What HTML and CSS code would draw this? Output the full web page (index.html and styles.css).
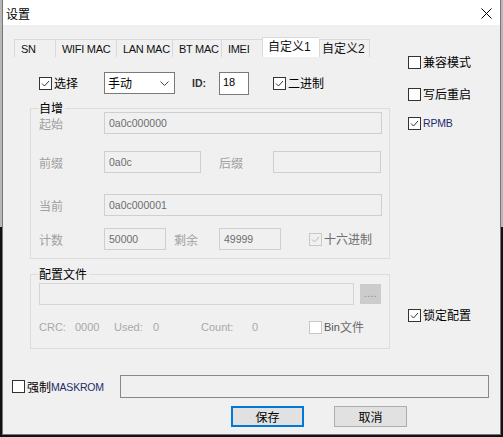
FILE: index.html
```html
<!DOCTYPE html>
<html>
<head>
<meta charset="utf-8">
<link rel="stylesheet" href="styles.css">
</head>
<body>
<div class="window">
  <div class="titlebar">
    <span class="title">设置</span>
    <svg class="close" width="11" height="11" viewBox="0 0 11 11"><path d="M0.5 0.5L10.5 10.5M10.5 0.5L0.5 10.5" stroke="#000" stroke-width="1" fill="none"/></svg>
  </div>
  <div class="main">
    <div class="leftcol">
      <div class="tabs">
        <div class="tab t-sn">SN</div>
        <div class="tab t-wifi">WIFI MAC</div>
        <div class="tab t-lan">LAN MAC</div>
        <div class="tab t-bt">BT MAC</div>
        <div class="tab t-imei">IMEI</div>
        <div class="tab t-c1 active">自定义1</div>
        <div class="tab t-c2">自定义2</div>
      </div>
      <div class="panel">
        <div class="row1">
          <div class="check w-sel"><span class="box"><svg viewBox="0 0 11 11" width="11" height="11"><polyline points="2,5.5 4.5,8 9,3" class="tick"/></svg></span><span class="cjk">选择</span></div>
          <div class="select"><span>手动</span><svg width="9" height="5" viewBox="0 0 9 5"><polyline points="0.5,0.5 4.5,4.5 8.5,0.5" fill="none" stroke="#444" stroke-width="1"/></svg></div>
          <div class="idlabel">ID:</div>
          <div class="idinput">18</div>
          <div class="check w-bin"><span class="box"><svg viewBox="0 0 11 11" width="11" height="11"><polyline points="2,5.5 4.5,8 9,3" class="tick"/></svg></span><span class="cjk">二进制</span></div>
        </div>

        <fieldset class="group g-inc">
          <legend class="legend">自增</legend>
          <div class="grow r-start">
            <div class="glabel">起始</div>
            <div class="field f-long">0a0c000000</div>
          </div>
          <div class="grow r-prefix">
            <div class="glabel">前缀</div>
            <div class="field f-prefix">0a0c</div>
            <div class="glabel l-suffix">后缀</div>
            <div class="field f-suffix"></div>
          </div>
          <div class="grow r-cur">
            <div class="glabel">当前</div>
            <div class="field f-long">0a0c000001</div>
          </div>
          <div class="grow r-count">
            <div class="glabel">计数</div>
            <div class="field f-num">50000</div>
            <div class="glabel l-remain">剩余</div>
            <div class="field f-num">49999</div>
            <div class="check disabled w-hex"><span class="box"><svg viewBox="0 0 11 11" width="11" height="11"><polyline points="2,5.5 4.5,8 9,3" class="tick"/></svg></span><span class="cjk">十六进制</span></div>
          </div>
        </fieldset>

        <fieldset class="group g-cfg">
          <legend class="legend">配置文件</legend>
          <div class="frow">
            <div class="field f-file"></div>
            <div class="browse">....</div>
          </div>
          <div class="crow">
            <span class="c-crc">CRC:</span>
            <span class="c-crcv">0000</span>
            <span class="c-used">Used:</span>
            <span class="c-usedv">0</span>
            <span class="c-count">Count:</span>
            <span class="c-countv">0</span>
            <div class="check disabled w-binf"><span class="box"></span><span class="bin">Bin</span><span class="cjk">文件</span></div>
          </div>
        </fieldset>
      </div>
    </div>
    <div class="rightcol">
      <div class="check rc r-compat"><span class="box"></span><span class="cjk">兼容模式</span></div>
      <div class="check rc r-reboot"><span class="box"></span><span class="cjk">写后重启</span></div>
      <div class="check rc r-rpmb"><span class="box"><svg viewBox="0 0 11 11" width="11" height="11"><polyline points="2,5.5 4.5,8 9,3" class="tick"/></svg></span><span class="navy">RPMB</span></div>
      <div class="check rc r-lock"><span class="box"><svg viewBox="0 0 11 11" width="11" height="11"><polyline points="2,5.5 4.5,8 9,3" class="tick"/></svg></span><span class="cjk">锁定配置</span></div>
    </div>
  </div>
  <div class="bottom">
    <div class="check w-mask"><span class="box"></span><span class="cjk">强制</span><span class="navy">MASKROM</span></div>
    <div class="progress"></div>
  </div>
  <div class="buttons">
    <div class="btn primary">保存</div>
    <div class="btn">取消</div>
  </div>
</div>
</body>
</html>
```

FILE: styles.css
```css
html, body {
  margin: 0;
  padding: 0;
}
body {
  width: 503px;
  height: 437px;
  overflow: hidden;
  background: linear-gradient(#b8b8b8 0, #b8b8b8 227px, #111 227px, #111 100%);
  font-family: "Liberation Sans", "Noto Sans CJK SC", sans-serif;
  font-size: 12px;
  line-height: 14px;
  color: #000;
}
.window {
  margin-left: 2px;
  width: 499px;
  height: 435px;
  box-sizing: border-box;
  border: 1px solid #777;
  border-top: none;
  background: #f0f0f0;
}
.titlebar {
  height: 25px;
  background: #fff;
  display: flex;
  align-items: center;
  justify-content: space-between;
  padding: 0 8px 0 3px;
}
.title {
  font-family: "Noto Sans CJK SC", sans-serif;
  font-size: 12px;
  line-height: 14px;
  padding-top: 3px;
}
.close {
  display: block;
  margin-top: 1px;
}
.main {
  display: flex;
  padding: 12px 0 0 11px;
}
.leftcol {
  width: 376px;
}
.tabs {
  display: flex;
  align-items: flex-end;
  height: 20px;
}
.tab {
  height: 18px;
  box-sizing: border-box;
  border-top: 1px solid #d9d9d9;
  border-left: 1px solid #d9d9d9;
  padding-left: 6px;
  font-size: 11px;
  letter-spacing: -0.3px;
  line-height: 18px;
  color: #111;
  white-space: nowrap;
  overflow: hidden;
}
.t-sn { width: 41px; }
.t-wifi { width: 61px; }
.t-lan { width: 56px; }
.t-bt { width: 49px; }
.t-imei { width: 41px; }
.t-c1 { width: 57px; }
.t-c2 { width: 51px; border-right: 1px solid #d9d9d9; padding-left: 2px; font-size: 12px; letter-spacing: 0; }
.tab.active {
  height: 20px;
  background: #fff;
  line-height: 19px;
  padding-left: 5px;
  font-size: 12px;
  letter-spacing: 0;
}
.panel {
  padding: 15px 0 0 16px;
}
.row1 {
  display: flex;
  align-items: center;
  height: 22px;
  margin-left: 9px;
}
.check {
  display: flex;
  align-items: center;
  height: 14px;
}
.box {
  width: 13px;
  height: 13px;
  box-sizing: border-box;
  border: 1px solid #333;
  background: #fff;
  margin-right: 2px;
  flex: none;
  display: flex;
  align-items: center;
  justify-content: center;
}
.box svg { display: block; }
.tick {
  fill: none;
  stroke: #333;
  stroke-width: 1;
}
.cjk {
  font-family: "Noto Sans CJK SC", sans-serif;
  font-size: 12px;
  line-height: 14px;
}
.navy {
  color: #1f2d6b;
  font-size: 10.5px;
  letter-spacing: -0.2px;
}
.w-sel { width: 65px; }
.select {
  width: 71px;
  height: 22px;
  box-sizing: border-box;
  border: 1px solid #7a7a7a;
  background: #fff;
  display: flex;
  align-items: center;
  justify-content: space-between;
  padding: 0 5px 0 3px;
}
.select span {
  font-family: "Noto Sans CJK SC", sans-serif;
  font-size: 12px;
}
.select svg { display: block; }
.idlabel {
  margin-left: 17px;
  width: 27px;
  font-size: 10.5px;
  font-weight: bold;
  color: #333;
}
.idinput {
  width: 30px;
  height: 23px;
  box-sizing: border-box;
  border: 1px solid #7a7a7a;
  background: #fff;
  padding: 2px 0 0 3px;
  font-size: 11px;
  line-height: 14px;
}
.w-bin { margin-left: 24px; }

.group {
  margin: 0;
  padding: 0 0 8px 8px;
  border: 1px solid #dcdcdc;
  width: 360px;
  box-sizing: border-box;
  min-width: 0;
}
.legend {
  font-family: "Noto Sans CJK SC", sans-serif;
  font-size: 12px;
  line-height: 12px;
  padding: 0 2px 0 0;
  margin-left: 0;
}
.g-inc { margin-top: 8px; }
.g-cfg { margin-top: 9px; padding-bottom: 14px; }
.grow {
  display: flex;
  align-items: center;
  height: 22px;
}
.r-start { margin-top: -2px; }
.r-prefix { margin-top: 17px; }
.r-cur { margin-top: 21px; }
.r-count { margin-top: 12px; }
.glabel {
  width: 65px;
  font-family: "Noto Sans CJK SC", sans-serif;
  font-size: 12px;
  color: #a0a0a0;
  padding-top: 2px;
}
.l-suffix { margin-left: 18px; width: 54px; }
.l-remain { margin-left: 8px; width: 45px; }
.field {
  height: 22px;
  box-sizing: border-box;
  border: 1px solid #cfcfcf;
  background: #f0f0f0;
  color: #6d6d6d;
  font-size: 10.5px;
  line-height: 14px;
  padding: 3px 0 0 4px;
}
.f-long { width: 278px; }
.f-prefix { width: 97px; }
.f-suffix { width: 108px; }
.f-num { width: 62px; }
.w-hex { margin-left: 28px; }
.check.disabled .box {
  border-color: #c8c8c8;
}
.check.disabled .tick { stroke: #b8b8b8; }
.w-hex .cjk { color: #6d6d6d; }
.w-hex .box { background: #f0f0f0; }

.frow {
  display: flex;
  align-items: center;
  margin-top: 3px;
  height: 22px;
}
.f-file { width: 315px; border-color: #d4d4d4; }
.browse {
  margin-left: 6px;
  width: 21px;
  height: 20px;
  background: #cccccc;
  color: #8a8a8a;
  font-size: 10px;
  line-height: 20px;
  text-align: center;
  letter-spacing: 0.5px;
}
.crow {
  display: flex;
  align-items: center;
  height: 14px;
  margin-top: 15px;
  color: #a8a8a8;
  font-size: 11px;
}
.c-crc { width: 36px; }
.c-crcv { width: 39px; }
.c-used { width: 39px; }
.c-usedv { width: 48px; }
.c-count { width: 51px; }
.c-countv { width: 57px; }
.w-binf .box { background: #fff; }
.bin { color: #555; font-size: 11px; }
.w-binf .cjk { color: #6d6d6d; }

.rightcol {
  margin-left: 18px;
  padding-top: 18px;
}
.r-compat { margin-top: 0; }
.r-reboot { margin-top: 18px; }
.r-rpmb { margin-top: 15px; }
.r-lock { margin-top: 178px; }

.bottom {
  display: flex;
  align-items: center;
  margin-top: 26px;
  padding-left: 9px;
  height: 23px;
}
.w-mask { width: 108px; }
.progress {
  width: 369px;
  height: 23px;
  box-sizing: border-box;
  border: 1px solid #888;
  background: #f0f0f0;
}
.buttons {
  display: flex;
  margin-top: 8px;
  padding-left: 228px;
  gap: 30px;
}
.btn {
  width: 73px;
  height: 21px;
  box-sizing: border-box;
  border: 1px solid #adadad;
  background: #e1e1e1;
  font-family: "Noto Sans CJK SC", sans-serif;
  font-size: 12px;
  line-height: 19px;
  text-align: center;
}
.btn.primary {
  border: 2px solid #0078d7;
  line-height: 17px;
}
```
